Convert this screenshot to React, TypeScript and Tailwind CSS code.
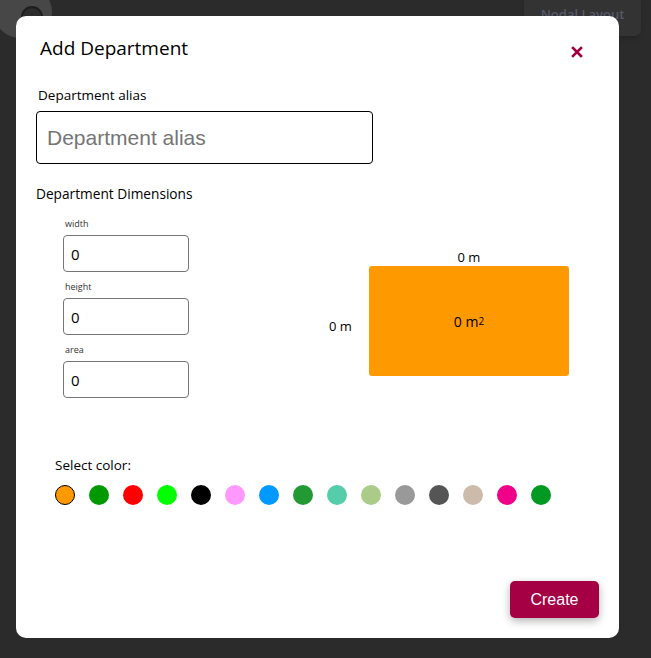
import { useState } from "react";

const COLORS = [
  "#ff9900",
  "#009900",
  "#ff0000",
  "#00ff00",
  "#000000",
  "#ff99ff",
  "#0099ff",
  "#229933",
  "#55ccaa",
  "#aacc88",
  "#999999",
  "#555555",
  "#ccbbaa",
  "#ee0088",
  "#009922",
];

const FIELDS = ["width", "height", "area"];

export default function App() {
  const [selected, setSelected] = useState(0);

  return (
    <div className="relative h-[658px] w-[651px] overflow-hidden bg-[#2b2b2b] font-['Open_Sans',sans-serif]">
      {/* page behind the overlay */}
      <div className="absolute -left-[6px] -top-[14px] h-[52px] w-[58px] rounded-full bg-[#474747]">
        <div className="absolute left-[27px] top-[20px] h-[22px] w-[22px] rounded-full border-2 border-[#1e1e1e] bg-[#2c2c2c]" />
      </div>
      <div className="absolute -top-[6px] left-[524px] flex h-[42px] w-[117px] items-end justify-center rounded-md bg-[#333333] pb-[12px] text-[13px] font-semibold text-[#55586a] shadow-md">
        Nodal Layout
      </div>

      {/* modal */}
      <div className="absolute left-[16px] top-[16px] flex h-[622px] w-[603px] flex-col rounded-[10px] bg-white pt-[18px] text-black">
        <div className="flex items-center justify-between pl-[24px] pr-[36px]">
          <h2 className="text-[19px] leading-[28px]">Add Department</h2>
          <svg width="12" height="12" viewBox="0 0 12 12" className="mt-[8px]">
            <path d="M2 2 L10 10 M10 2 L2 10" stroke="#a0003f" strokeWidth="2.6" strokeLinecap="square" />
          </svg>
        </div>

        <div className="px-[20px]">
          <label className="mt-[23px] block pl-[2px] text-[13.5px] leading-[20px]">Department alias</label>
          <input
            placeholder="Department alias"
            className="mt-[6px] h-[53px] w-[337px] rounded-[4px] border border-black px-[10px] font-['Liberation_Sans',sans-serif] text-[21px] placeholder:text-[#757575] outline-none"
          />

          <div className="mt-[20px] text-[13.7px] font-medium leading-[20px]">Department Dimensions</div>

          <div className="flex">
            <div className="w-[153px] pl-[27px] pt-[13px]">
              {FIELDS.map((f, i) => (
                <div key={f} className={i > 0 ? "mt-[8px]" : ""}>
                  <div className="pl-[2px] text-[9px] leading-[14px] text-[#333]">{f}</div>
                  <input
                    defaultValue="0"
                    className="mt-[4px] h-[37px] w-[126px] rounded-[4px] border border-[#767676] px-[7px] text-[15px] outline-none"
                  />
                </div>
              ))}
            </div>

            <div className="ml-[140px] mt-[44px] grid grid-cols-[40px_200px] grid-rows-[18px_110px] text-[13px]">
              <div />
              <div className="text-center leading-[18px]">0 m</div>
              <div className="mt-[10px] self-center leading-[18px]">0 m</div>
              <div className="flex items-center justify-center rounded-[3px] bg-[#ff9900] text-[14px]">
                <span>
                  0 m<span className="relative -top-[2px] text-[10px]">2</span>
                </span>
              </div>
            </div>
          </div>

          <div className="mt-[57px] pl-[19px]">
            <div className="text-[13.5px] leading-[20px]">Select color:</div>
            <div className="mt-[10px] flex gap-[14px]">
              {COLORS.map((c, i) => (
                <button
                  key={c + i}
                  onClick={() => setSelected(i)}
                  className={`h-[20px] w-[20px] rounded-full ${i === selected ? "border border-black" : ""}`}
                  style={{ backgroundColor: c }}
                />
              ))}
            </div>
          </div>
        </div>

        <div className="mt-auto flex justify-end pb-[20px] pr-[20px]">
          <button className="h-[37px] w-[89px] rounded-[5px] bg-[#a50044] font-['Liberation_Sans',sans-serif] text-[16px] text-white shadow-[0_3px_8px_rgba(0,0,0,0.3)]">
            Create
          </button>
        </div>
      </div>
    </div>
  );
}
